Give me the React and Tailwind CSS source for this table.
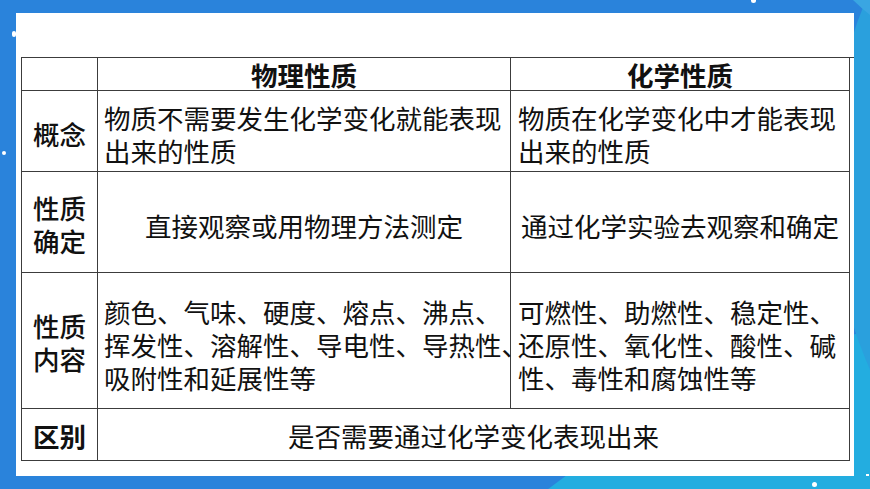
import React from 'react';

const cjk = { fontFamily: '"Noto Sans CJK SC", "Noto Sans", sans-serif' };

function Cell({ children, className = '' }) {
  return (
    <div className={`border-r border-b border-[#3c3c3c] flex items-center ${className}`}>
      {children}
    </div>
  );
}

export default function App() {
  return (
    <div className="relative w-[870px] h-[489px] overflow-hidden bg-[#2a83db]" style={cjk}>
      {/* background decoration */}
      <div className="absolute left-[200px] top-[300px] w-[1800px] h-[1800px] rounded-full bg-[#23ade0]" />
      <div className="absolute left-[830px] top-[-290px] w-[940px] h-[940px] rounded-full bg-[#2aa0dd]" />
      <div className="absolute left-[790px] top-[-360px] w-[420px] h-[420px] rounded-full bg-[#3aa6e2]" />
      <div className="absolute left-[12px] top-[31px] w-[4px] h-[6px] rounded-full bg-white" />
      <div className="absolute left-[2px] top-[151px] w-[4px] h-[4px] rounded-full bg-white" />
      <div className="absolute left-[751px] top-[-2px] w-[5px] h-[5px] rounded-full bg-white" />
      <div className="absolute left-[812px] top-[482px] w-[5px] h-[5px] rounded-full bg-white" />
      <div className="absolute left-[866px] top-[474px] w-[3px] h-[2px] bg-white" />

      <div className="relative pt-[13px] pl-[16px]">
        <div className="w-[838px] h-[463px] bg-white pt-[44px] pl-[5px]">
          <div className="grid grid-cols-[76px_413px_339px] grid-rows-[33px_81px_101px_136px_52px] border-t border-l border-[#3c3c3c] text-[26.5px] leading-[33px] text-[#111]">
            <Cell />
            <Cell className="justify-center font-bold">物理性质</Cell>
            <Cell className="justify-center font-bold">化学性质</Cell>

            <Cell className="justify-center font-medium pt-[4px]">概念</Cell>
            <Cell className="pl-[6px] pt-[6px]">
              <div>物质不需要发生化学变化就能表现<br />出来的性质</div>
            </Cell>
            <Cell className="pl-[7px] pt-[6px]">
              <div>物质在化学变化中才能表现<br />出来的性质</div>
            </Cell>

            <Cell className="justify-center font-medium pt-[4px]">
              <div className="text-center">性质<br />确定</div>
            </Cell>
            <Cell className="justify-center pt-[6px]">直接观察或用物理方法测定</Cell>
            <Cell className="justify-center pt-[6px]">通过化学实验去观察和确定</Cell>

            <Cell className="justify-center font-medium pt-[2px]">
              <div className="text-center">性质<br />内容</div>
            </Cell>
            <Cell className="pl-[6px] pt-[8px] relative z-10">
              <div className="whitespace-nowrap">
                颜色、气味、硬度、熔点、沸点、<br />
                挥发性、溶解性、导电性、导热性、<br />
                吸附性和延展性等
              </div>
            </Cell>
            <Cell className="pl-[7px] pt-[8px]">
              <div className="whitespace-nowrap">
                可燃性、助燃性、稳定性、<br />
                还原性、氧化性、酸性、碱<br />
                性、毒性和腐蚀性等
              </div>
            </Cell>

            <Cell className="justify-center font-bold pt-[2px]">区别</Cell>
            <Cell className="col-span-2 justify-center pt-[2px]">是否需要通过化学变化表现出来</Cell>
          </div>
        </div>
      </div>
    </div>
  );
}
